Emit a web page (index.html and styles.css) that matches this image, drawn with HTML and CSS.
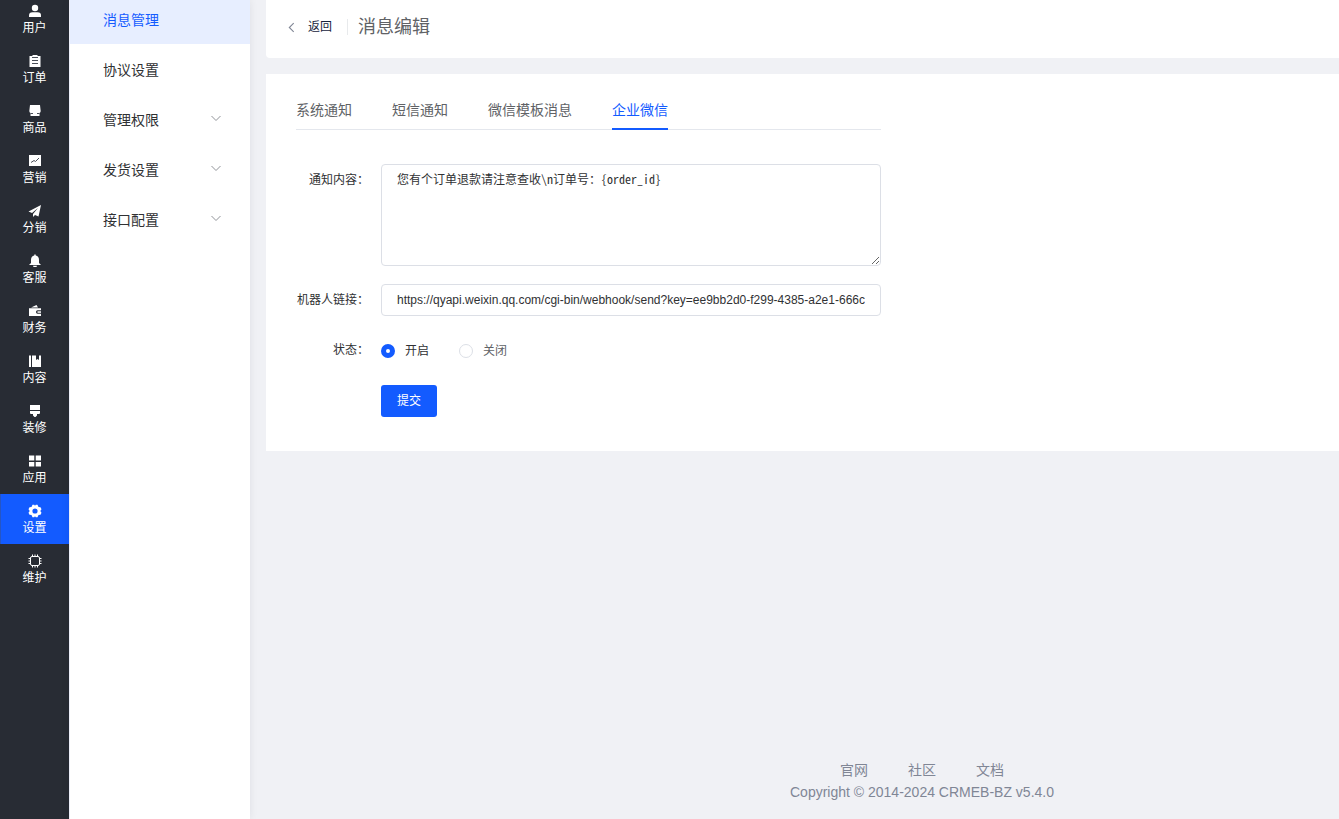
FILE: index.html
```
<!DOCTYPE html>
<html lang="zh-CN">
<head>
<meta charset="utf-8">
<title>消息编辑</title>
<link rel="stylesheet" href="styles.css">
</head>
<body>
<div class="shell">
  <nav class="rail" aria-label="主导航">
    <div class="rail-list">
      <a class="rail-item" href="#"><svg class="rail-icon" viewBox="0 0 14 14"><circle cx="7" cy="4" r="3.2"/><path d="M1 13v-1.500q0-3.300 3.500-3.300h5q3.500 0 3.500 3.300V13z"/></svg>用户</a>
      <a class="rail-item" href="#"><svg class="rail-icon" viewBox="0 0 14 14"><path d="M1.500 2H4.500V1h5v1h3v11h-11z"/><path class="cut" d="M4 3.500h6M4 6.500h6M4 9.500h6"/></svg>订单</a>
      <a class="rail-item" href="#"><svg class="rail-icon" viewBox="0 0 14 14"><path d="M2 1h10l.7 6q0 1.500-1.200 2v3h-9V9Q1.300 8.500 1.300 7z"/><path class="cut" d="M2.500 9.500H5M9 9.500h2.500"/></svg>商品</a>
      <a class="rail-item" href="#"><svg class="rail-icon" viewBox="0 0 14 14"><path d="M1 1h12v11H1z"/><path class="cut" d="M3 8.500l3-2 1.500 1L11 4"/></svg>营销</a>
      <a class="rail-item" href="#"><svg class="rail-icon" viewBox="0 0 14 14"><path d="M13 1L.5 7.500 4 9l6-5-5 6v3l2-2 3.500 1.500z"/></svg>分销</a>
      <a class="rail-item" href="#"><svg class="rail-icon" viewBox="0 0 14 14"><path d="M6.300.5h1.400v1Q11 2.200 11 6v3l2 2H1l2-2V6q0-3.800 3.300-4.500zM5 11.700h4L8.500 13h-3z"/></svg>客服</a>
      <a class="rail-item" href="#"><svg class="rail-icon" viewBox="0 0 14 14"><path d="M3 3.500L8.500 1l1.500 2.500zM1 4.200h12v2H9.500Q8 6.200 8 8t1.500 1.800H13V12H1z"/><path d="M9.500 7.300h3.500v1.500H9.500z"/></svg>财务</a>
      <a class="rail-item" href="#"><svg class="rail-icon" viewBox="0 0 14 14"><path d="M1 1.500h2V13H1zM4 1.500h4V6l1.500-1L11 6V1.500h2V13H4z"/></svg>内容</a>
      <a class="rail-item" href="#"><svg class="rail-icon" viewBox="0 0 14 14"><path d="M2 1h10v5H2zM2 7h10v2q0 1-1 1H9v1.500L7.500 13h-1L5 11.500V10H3q-1 0-1-1z"/></svg>装修</a>
      <a class="rail-item" href="#"><svg class="rail-icon" viewBox="0 0 14 14"><path d="M1 1.500h5.300v5H1zM7.700 1.500H13v5H7.700zM1 8h5.300v4.500H1zM7.700 8H13v4.500H7.700z"/></svg>应用</a>
      <a class="rail-item rail-item-active" href="#" aria-current="page"><svg class="rail-icon" viewBox="0 0 14 14"><path fill-rule="evenodd" d="M4.500.7h1.700l.8 1 .8-1h1.700l1 2.300 2 .2 1 2L12.300 7l1.200 1.800-1 2-2 .2-1 2.300H7.800l-.8-1-.8 1H4.500l-1-2.300-2-.2-1-2L1.700 7 .5 5.200l1-2 2-.2zM7 4.400a2.600 2.600 0 1 0 0 5.200a2.600 2.600 0 1 0 0-5.200z"/></svg>设置</a>
      <a class="rail-item" href="#"><svg class="rail-icon" viewBox="0 0 14 14"><rect class="line" x="2.500" y="2.500" width="9" height="9" rx="1.500"/><path class="pins" d="M4.500.5v2M7 .5v2M9.500.5v2M4.500 11.500v2M7 11.500v2M9.500 11.500v2M.5 4.500h2M.5 7h2M.5 9.500h2M11.500 4.500h2M11.500 7h2M11.500 9.500h2"/></svg>维护</a>
    </div>
  </nav>

  <nav class="menu" aria-label="设置">
    <div class="menu-list">
      <a class="menu-item menu-item-active" href="#" aria-current="page">消息管理</a>
      <a class="menu-item" href="#">协议设置</a>
      <a class="menu-item" href="#">管理权限<svg class="chevron" viewBox="0 0 10 10"><path d="M.5 2L5 6.500 9.500 2"/></svg></a>
      <a class="menu-item" href="#">发货设置<svg class="chevron" viewBox="0 0 10 10"><path d="M.5 2L5 6.500 9.500 2"/></svg></a>
      <a class="menu-item" href="#">接口配置<svg class="chevron" viewBox="0 0 10 10"><path d="M.5 2L5 6.500 9.500 2"/></svg></a>
    </div>
  </nav>

  <div class="page">
    <header class="page-head">
      <a class="back" href="#"><svg class="back-icon" viewBox="0 0 10 10"><path d="M7 1L3 5l4 4"/></svg>返回</a>
      <h1 class="title">消息编辑</h1>
    </header>

    <main class="card">
      <div class="tabs" role="tablist">
        <button class="tab" type="button" role="tab">系统通知</button>
        <button class="tab" type="button" role="tab">短信通知</button>
        <button class="tab" type="button" role="tab">微信模板消息</button>
        <button class="tab tab-active" type="button" role="tab" aria-selected="true">企业微信</button>
      </div>
      <form class="form">
        <label class="label" for="content">通知内容：</label>
        <textarea class="field area" id="content" spellcheck="false">您有个订单退款请注意查收\n订单号：{order_id}</textarea>
        <label class="label" for="robot">机器人链接：</label>
        <input class="field" id="robot" type="text" value="https://qyapi.weixin.qq.com/cgi-bin/webhook/send?key=ee9bb2d0-f299-4385-a2e1-666c">
        <span class="label" id="status">状态：</span>
        <div class="radios" role="radiogroup" aria-labelledby="status">
          <label class="choice"><input class="radio" type="radio" name="status" checked>开启</label>
          <label class="choice choice-off"><input class="radio" type="radio" name="status">关闭</label>
        </div>
        <button class="submit" type="button">提交</button>
      </form>
    </main>

    <footer class="footer">
      <div class="links"><a href="#">官网</a><a href="#">社区</a><a href="#">文档</a></div>
      <div>Copyright © 2014-2024 CRMEB-BZ v5.4.0</div>
    </footer>
  </div>
</div>
</body>
</html>
```
FILE: styles.css
```
* { box-sizing: border-box; }
body {
  margin: 0;
  background: #f0f1f5;
  color: #303133;
  font: 14px/22px "Liberation Sans", "Noto Sans CJK SC", sans-serif;
}
a { color: inherit; text-decoration: none; }
button, input, textarea { font: inherit; color: inherit; margin: 0; }

.shell { display: flex; height: 100vh; overflow: hidden; }

.rail { flex: none; width: 69px; background: #282c34; overflow: hidden; }
.rail-list, .menu-list { margin-top: -6px; }
.rail-item {
  display: flex;
  flex-direction: column;
  align-items: center;
  height: 50px;
  padding-top: 10px;
  color: #fff;
  font-size: 12px;
  line-height: 20px;
}
.rail-item-active { background: #135bff; border-left: 1px solid #2656c4; padding-right: 1px; }
.rail-icon { width: 14px; height: 14px; fill: #fff; flex: none; }
.cut { fill: none; stroke: #4b505a; stroke-width: 1; }
.line { fill: none; stroke: #fff; stroke-width: 1; }
.pins { stroke: #fff; stroke-width: 1; }

.menu {
  flex: none;
  width: 181px;
  overflow: hidden;
  background: #fff;
  border-left: 1px solid #eceef8;
  box-shadow: 0 0 8px rgba(0, 21, 41, .08);
}
.menu-item {
  display: flex;
  align-items: center;
  justify-content: space-between;
  height: 50px;
  padding: 2px 29px 0 33px;
}
.menu-item-active { background: #e7eeff; color: #135bff; }
.chevron { width: 10px; height: 10px; margin-bottom: 2px; fill: none; stroke: #909399; }

.page {
  flex: 1;
  min-width: 0;
  display: flex;
  flex-direction: column;
  padding-left: 16px;
}
.page-head {
  display: flex;
  align-items: center;
  height: 58px;
  padding: 0 20px 4px;
  background: #fff;
  border-radius: 0 0 0 4px;
}
.back {
  display: flex;
  align-items: center;
  gap: 11px;
  height: 16px;
  padding-right: 15px;
  border-right: 1px solid #e8eaec;
  color: #17233d;
  font-size: 12px;
}
.back-icon { width: 11px; height: 11px; fill: none; stroke: #808695; }
.title { margin: 0 0 0 10px; font-size: 18px; font-weight: 400; color: #606266; }

.card { margin-top: 16px; padding: 16px 30px 34px; background: #fff; }
.tabs {
  display: flex;
  gap: 40px;
  max-width: 585px;
  height: 40px;
  border-bottom: 1px solid #e4e7ed;
}
.tab {
  height: 40px;
  padding: 2px 0 0;
  border: 0;
  border-bottom: 2px solid transparent;
  background: none;
  color: #606266;
}
.tab-active { border-color: #135bff; color: #135bff; }

.form {
  display: grid;
  grid-template-columns: 73px minmax(0, 500px);
  column-gap: 12px;
  row-gap: 18px;
  margin-top: 34px;
  font-size: 12px;
}
.label { text-align: right; line-height: 32px; white-space: nowrap; }
.field {
  width: 100%;
  height: 32px;
  padding: 0 15px;
  border: 1px solid #dcdfe6;
  border-radius: 4px;
  background: #fff;
  outline: 0;
}
.area {
  display: block;
  height: 102px;
  padding: 5px 15px;
  line-height: 18px;
  font-family: "Noto Sans Mono CJK SC", "Liberation Mono", "Noto Sans CJK SC", monospace;
}
.radios { display: flex; gap: 30px; height: 33px; align-items: center; }
.choice { display: flex; align-items: center; gap: 10px; }
.choice-off { color: #606266; }
.radio {
  appearance: none;
  width: 14px;
  height: 14px;
  border: 1px solid #dcdfe6;
  border-radius: 50%;
  background: #fff;
}
.radio:checked { border: 5px solid #135bff; }
.submit {
  grid-column: 2;
  justify-self: start;
  height: 32px;
  padding: 0 16px;
  border: 0;
  border-radius: 3px;
  background: #135bff;
  color: #fff;
}

.footer {
  margin-top: auto;
  padding: 0 0 16px 239px;
  text-align: center;
  color: #808695;
}
.links { display: flex; justify-content: center; gap: 40px; }
```
